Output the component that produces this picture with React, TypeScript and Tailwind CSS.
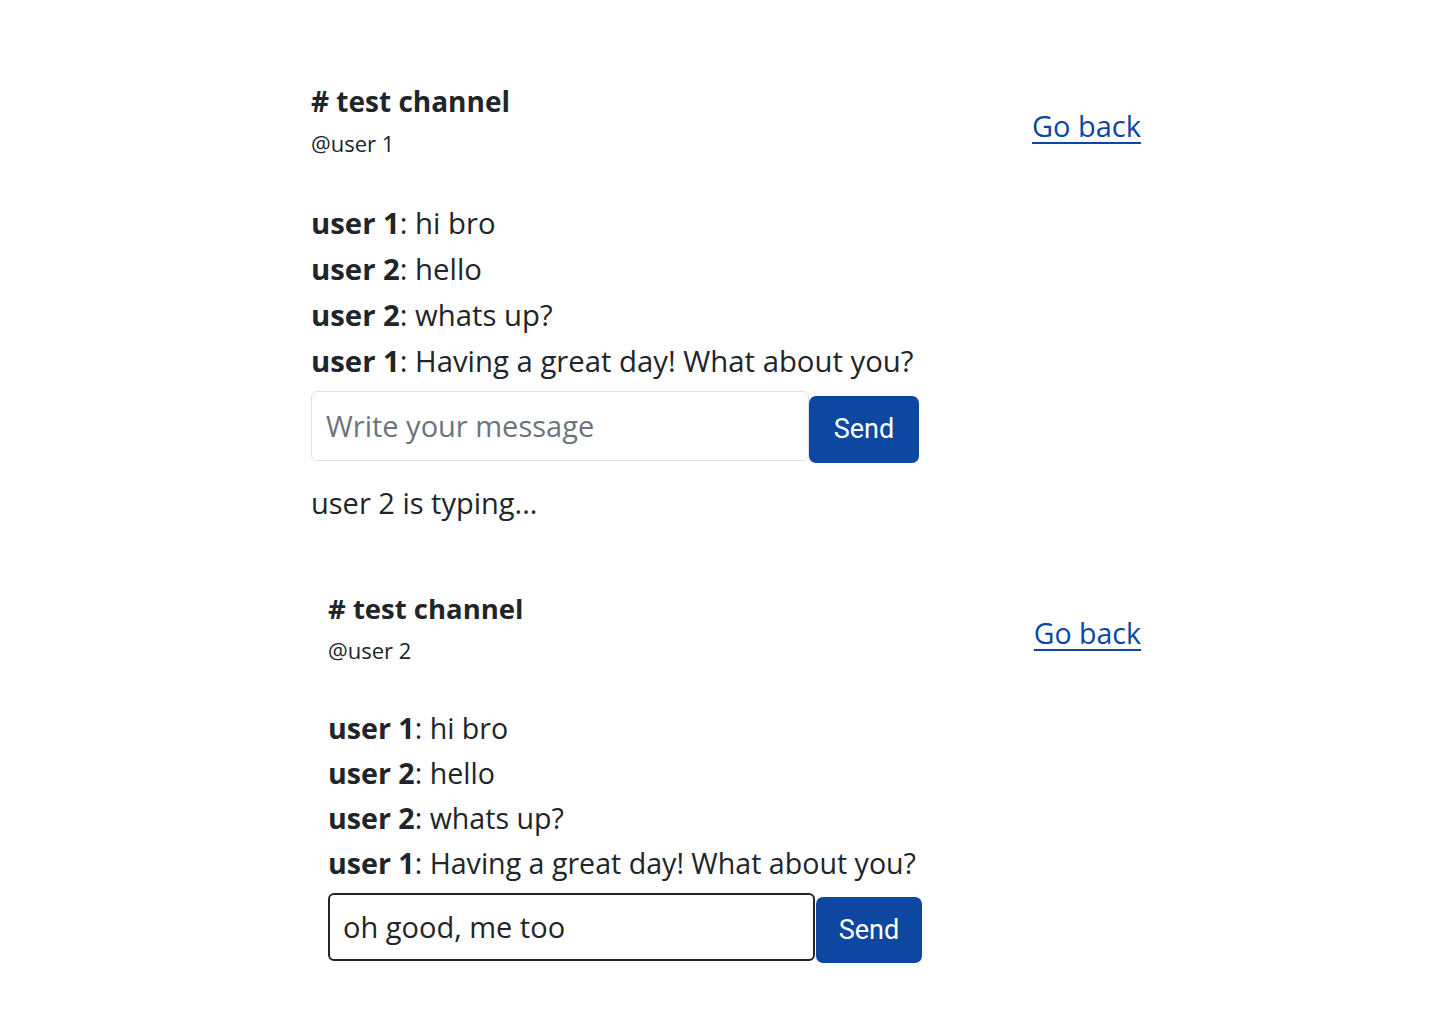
import React from "react";

const msgs: [string, string][] = [
  ["user 1", "hi bro"],
  ["user 2", "hello"],
  ["user 2", "whats up?"],
  ["user 1", "Having a great day! What about you?"],
];

type P = {
  user: string;
  value?: string;
  typing?: boolean;
  focused?: boolean;
  pl: string;
  lh: string;
  subMt: string;
  msgMt: string;
  backMt: string;
  titleSize: string;
  msgSize: string;
  backSize: string;
};

function Panel({ user, value, typing, focused, pl, lh, subMt, msgMt, backMt, titleSize, msgSize, backSize }: P) {
  return (
    <div className={`${pl} pr-[299px]`}>
      <div className="flex items-start justify-between">
        <div>
          <div className={`${titleSize} font-bold leading-[34px] text-[#212529]`}>
            # test channel
          </div>
          <div className={`${subMt} text-[22px] leading-[26px] text-[#212529]`}>@{user}</div>
        </div>
        <a
          href="#"
          className={`${backMt} ${backSize} leading-[34px] text-[#0d47a1] underline underline-offset-[5px]`}
        >
          Go back
        </a>
      </div>
      <div className={`${msgMt} ${msgSize} text-[#212529]`}>
        {msgs.map(([u, m], i) => (
          <div key={i} className={lh}>
            <span className="font-bold">{u}</span>: {m}
          </div>
        ))}
      </div>
      {focused ? (
        <div className="mt-[8px] flex items-start">
          <div className="flex h-[68px] w-[487px] items-center rounded-[6px] border-2 border-[#212529] px-[13px] text-[29px] text-[#212529]">
            {value}
          </div>
          <button
            className="mt-[4px] ml-[1px] h-[66px] w-[106px] rounded-[7px] bg-[#0d47a1] text-[27px] text-white"
            style={{ fontFamily: "Roboto, 'Liberation Sans', sans-serif" }}
          >
            Send
          </button>
        </div>
      ) : (
        <div className="mt-[7px] flex items-start">
          <div className="flex h-[70px] w-[498px] items-center rounded-[6px] border border-[#dee2e6] px-[14px] text-[29px] text-[#6c757d]">
            Write your message
          </div>
          <button
            className="mt-[5px] h-[67px] w-[110px] rounded-[7px] bg-[#0d47a1] text-[27px] text-white"
            style={{ fontFamily: "Roboto, 'Liberation Sans', sans-serif" }}
          >
            Send
          </button>
        </div>
      )}
      {typing && (
        <div className="mt-[23px] text-[29px] leading-[34px] text-[#212529]">user 2 is typing...</div>
      )}
    </div>
  );
}

export default function App() {
  return (
    <div
      className="h-[1024px] w-[1440px] bg-white"
      style={{ fontFamily: "'Open Sans', 'Noto Sans', sans-serif" }}
    >
      <div className="pt-[84px]">
        <Panel
          user="user 1"
          typing
          pl="pl-[311px]"
          lh="leading-[46px]"
          subMt="mt-[12px]"
          msgMt="mt-[44px]"
          backMt="mt-[25px]"
          titleSize="text-[28px]"
          msgSize="text-[29.3px]"
          backSize="text-[29px]"
        />
      </div>
      <div className="pt-[72px]">
        <Panel
          user="user 2"
          value="oh good, me too"
          focused
          pl="pl-[328px]"
          lh="leading-[45px]"
          subMt="mt-[11px]"
          msgMt="mt-[42px]"
          backMt="mt-[24px]"
          titleSize="text-[27.5px]"
          msgSize="text-[28.6px]"
          backSize="text-[28.5px]"
        />
      </div>
    </div>
  );
}
